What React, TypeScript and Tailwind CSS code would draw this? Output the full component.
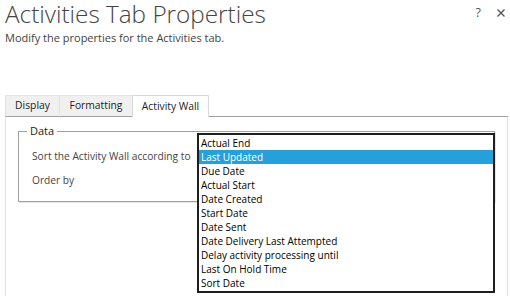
import React from "react";

const items = [
  "Actual End",
  "Last Updated",
  "Due Date",
  "Actual Start",
  "Date Created",
  "Start Date",
  "Date Sent",
  "Date Delivery Last Attempted",
  "Delay activity processing until",
  "Last On Hold Time",
  "Sort Date",
];

export default function App() {
  return (
    <div
      className="relative w-[510px] h-[296px] overflow-hidden bg-white text-[#444]"
      style={{ fontFamily: "'Open Sans', 'Noto Sans', sans-serif" }}
    >
      <div className="flex justify-between pl-[5px] pr-[5px]">
        <div>
          <div className="text-[24.3px] font-light leading-[27px] text-[#444]">
            Activities Tab Properties
          </div>
          <div className="text-[11px] leading-[16px] mt-[3px] text-[#444]">
            Modify the properties for the Activities tab.
          </div>
        </div>
        <div className="flex items-start gap-[16px] pt-[4px] text-[12.5px] text-[#555]">
          <span className="leading-[18px]">?</span>
          <svg width="8" height="8" viewBox="0 0 8 8" className="mt-[5px]">
            <path d="M0.5 0.5 L7.5 7.5 M7.5 0.5 L0.5 7.5" stroke="#555" strokeWidth="1.4" />
          </svg>
        </div>
      </div>

      <div className="mt-[49px] ml-[5px] mr-[2px]">
        <div className="flex h-[22px] text-[10.3px] text-[#222]">
          <div className="w-[54px] flex items-center justify-center bg-[#f0f0f0] border-l border-t border-[#e3e3e3] border-b border-b-[#a0a0a0]">
            Display
          </div>
          <div className="w-[73px] flex items-center justify-center bg-[#f0f0f0] border-l border-t border-[#e3e3e3] border-b border-b-[#a0a0a0]">
            Formatting
          </div>
          <div className="w-[77px] flex items-center justify-center bg-white border-l border-t border-r border-[#d9d9d9]">
            Activity Wall
          </div>
          <div className="flex-1 border-b border-[#a0a0a0]" />
        </div>
        <div className="h-[200px] border-l border-r border-[#e3e3e3] pt-[6px] px-[12px]">
          <fieldset className="border border-[#a0a0a0] shadow-[1px_1px_0_#e5e5e5] h-[79px]">
            <legend className="ml-[8px] px-[3px] text-[11px] text-[#222] leading-[16px]">
              Data
            </legend>
            <div className="text-[10.2px] text-[#444] mt-[5px] pl-[13px] leading-[24px]">
              <div>Sort the Activity Wall according to</div>
              <div>Order by</div>
            </div>
          </fieldset>
        </div>
      </div>

      <div className="absolute left-[197px] top-[133px] w-[298px] border-2 border-[#1e1e1e] bg-white text-[10px] text-black py-[1px]">
        {items.map((t, i) => (
          <div
            key={t}
            className={
              "h-[14px] leading-[14px] pl-[2px] " +
              (i === 1 ? "bg-[#26a0da] text-white" : "")
            }
          >
            {t}
          </div>
        ))}
      </div>
    </div>
  );
}
